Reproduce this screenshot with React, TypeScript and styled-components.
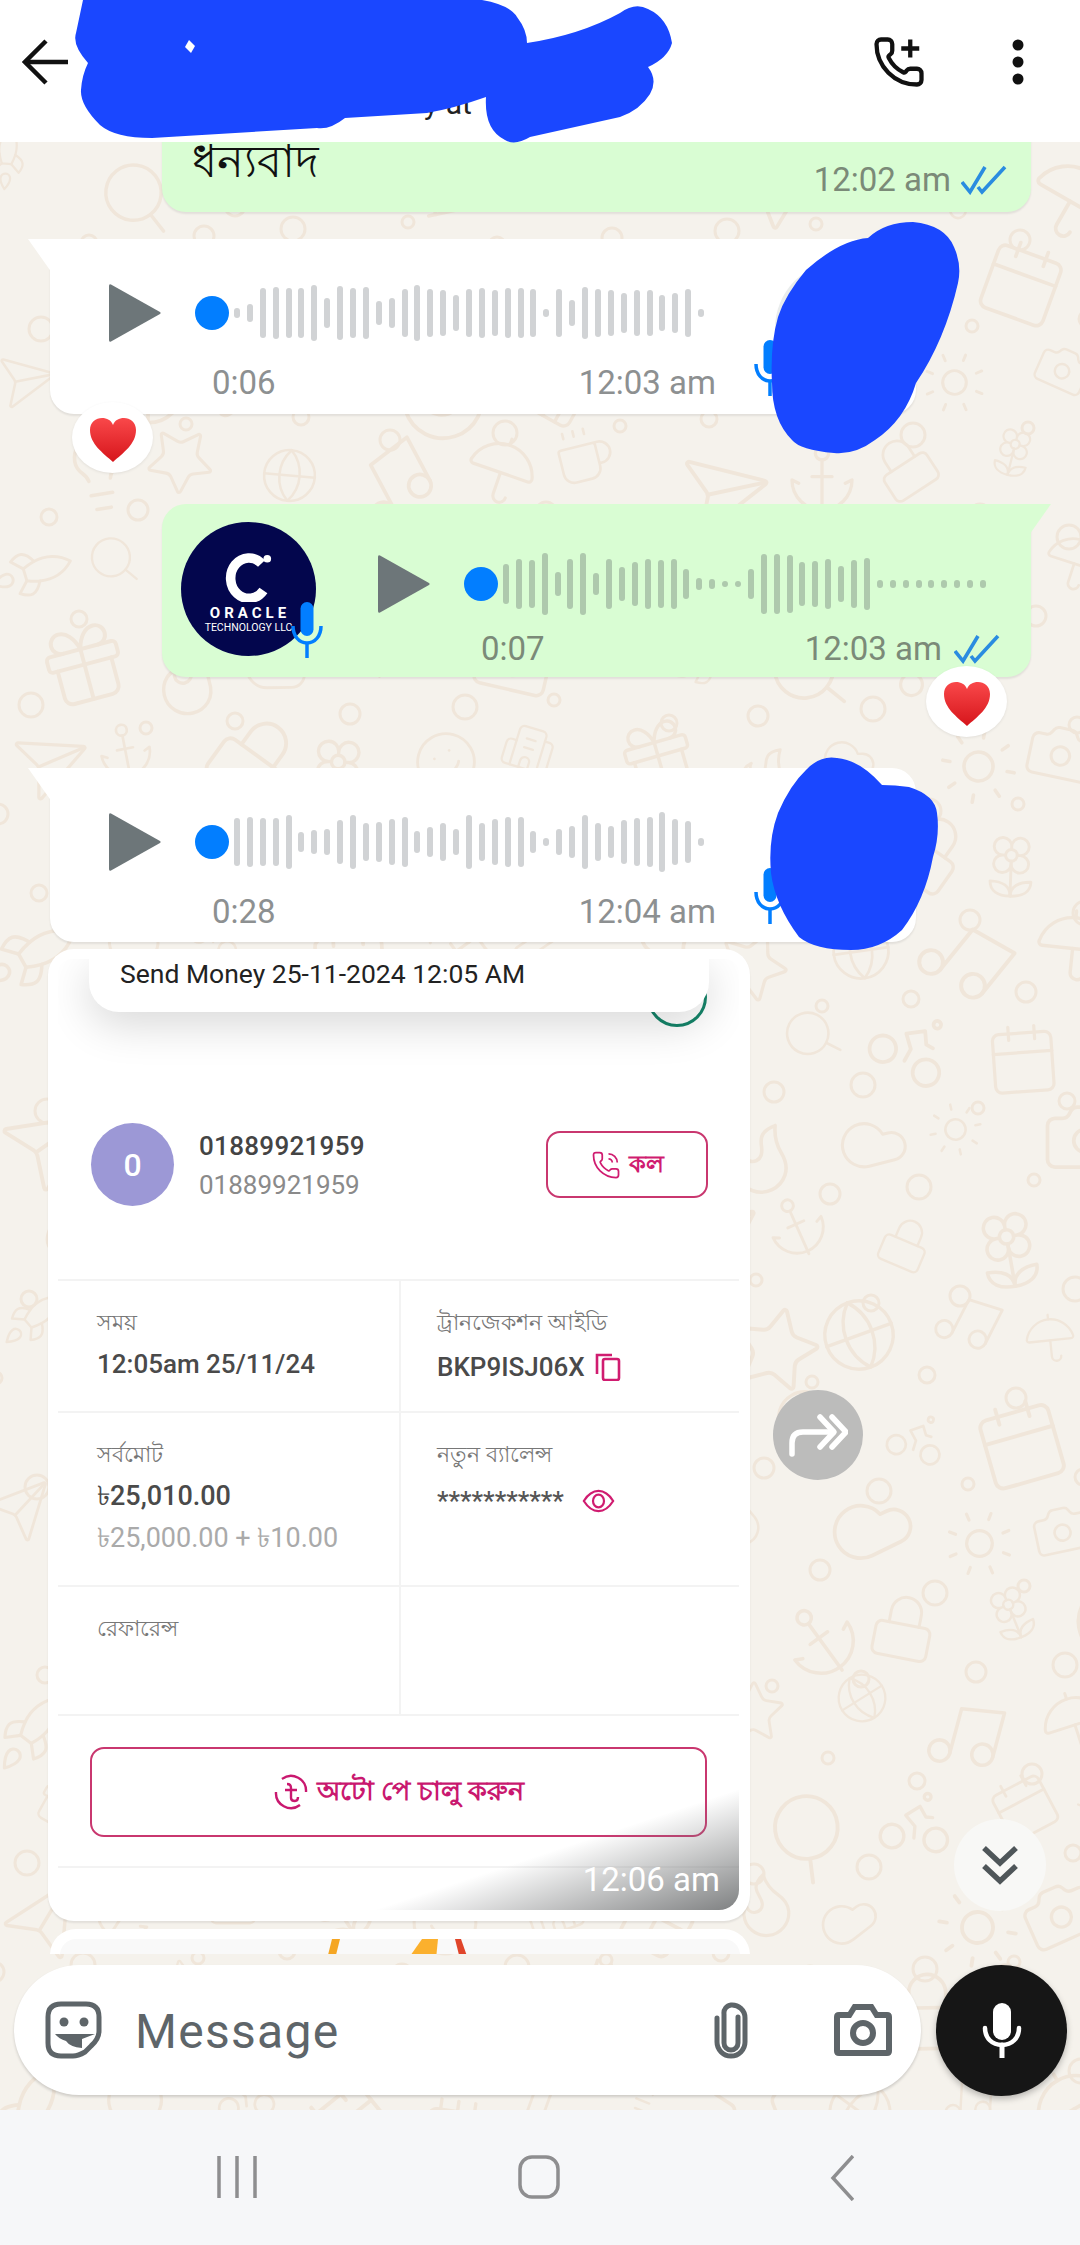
import React from "react";
import styled, { createGlobalStyle } from "styled-components";
import {
  Rocket, Coffee, Camera, Music, Cloud, Star, Gift, Pencil, Smile, Calendar, Lock, Search, Send,
  Heart, Umbrella, Sun, Globe, Flame, Lightbulb, Building2, Cake, Flower2, Bike, Anchor,
} from "lucide-react";

const Global = createGlobalStyle`
  html, body { margin: 0; padding: 0; background: #fff; }
  body { font-family: Roboto, "Noto Sans", "Noto Sans CJK SC", sans-serif; }
  * { box-sizing: border-box; }
`;

const Screen = styled.div`
  width: 1080px; height: 2245px; display: flex; flex-direction: column;
  overflow: hidden; position: relative; background: #fff;
`;
const Header = styled.header`
  height: 142px; flex: none; display: flex; align-items: center; background: #fff;
  padding: 0 55px 18px 22px; position: relative; z-index: 3;
`;
const HeaderTitle = styled.div`
  flex: 1; align-self: flex-end; padding: 0 0 0 354px; font-size: 30px; line-height: 32px; color: #222;
  margin-bottom: 4px;
`;
const HeaderIcons = styled.div`display: flex; align-items: center; gap: 85px;`;
const Chat = styled.main`
  flex: 1; position: relative; display: flex; flex-direction: column; overflow: hidden;
  background: #f5f2ec;
`;
const DoodleLayer = styled.svg`position: absolute; inset: 0; width: 100%; height: 100%;`;
const Messages = styled.div`
  height: 1812px; flex: none; position: relative; overflow: hidden; display: flex; flex-direction: column;
`;
const TextBubble = styled.div`
  margin: -32px 0 0 162px; width: 869px; height: 102px; flex: none; background: #d9fdd3;
  border-radius: 0 0 24px 24px; padding: 22px 24px 0 30px; position: relative;
  box-shadow: 0 2px 2px rgba(0,0,0,.08); display: flex; justify-content: space-between;
`;
const BanglaLarge = styled.span`font-size: 45px; line-height: 56px; color: #111; font-family: "Noto Sans", Roboto, sans-serif;`;
const MetaRow = styled.div`display: flex; align-items: center; gap: 10px; margin-top: 28px; height: 40px;`;
const Time = styled.span<{ $tone: string }>`
  font-size: 33px; line-height: 40px; color: ${(p) => p.$tone}; white-space: nowrap;
`;
const Bubble = styled.div<{ $out?: boolean; $top: number; $h: number }>`
  flex: none; position: relative; margin-top: ${(p) => p.$top}px; height: ${(p) => p.$h}px;
  background: ${(p) => (p.$out ? "#d9fdd3" : "#fff")};
  margin-left: ${(p) => (p.$out ? 162 : 50)}px; width: ${(p) => (p.$out ? 869 : 866)}px;
  border-radius: ${(p) => (p.$out ? "24px 0 24px 24px" : "0 24px 24px 24px")};
  box-shadow: 0 2px 2px rgba(0,0,0,.08);
  display: flex; align-items: flex-start; padding-left: ${(p) => (p.$out ? 19 : 59)}px;
  &::before {
    content: ""; position: absolute; top: 0; width: 24px; height: 34px;
    background: inherit;
    ${(p) => (p.$out
      ? "right: -20px; clip-path: polygon(0 0, 100% 0, 0 100%);"
      : "left: -22px; clip-path: polygon(0 0, 100% 0, 100% 100%);")}
  }
`;
const VoiceAvatar = styled.div`
  width: 135px; height: 134px; border-radius: 50%; background: #03064d; color: #fff; flex: none;
  margin-top: 18px; margin-right: 62px; position: relative; display: flex; flex-direction: column;
  align-items: center; padding-top: 30px;
`;
const LogoWord = styled.div`font-size: 15px; line-height: 17px; font-weight: 700; letter-spacing: 4px; margin-top: 3px; padding-left: 3px;`;
const LogoSub = styled.div`font-size: 10.5px; line-height: 12px; white-space: nowrap;`;
const AvatarMic = styled.div`position: absolute; right: -7px; bottom: -2px; line-height: 0;`;
const Player = styled.div<{ $w: number; $top: number }>`
  width: ${(p) => p.$w}px; margin-top: ${(p) => p.$top}px; display: flex; flex-direction: column;
`;
const Track = styled.div`display: flex; align-items: center; height: 64px;`;
const Dot = styled.div`width: 34px; height: 34px; border-radius: 50%; background: #027eff; margin-left: 33px; margin-right: 5px; flex: none;`;
const Bars = styled.div`display: flex; align-items: center; gap: 6.9px;`;
const Bar = styled.i<{ $c: string }>`display: block; width: 6px; border-radius: 3px; background: ${(p) => p.$c}; flex: none;`;
const PlayerMeta = styled.div<{ $gap: number }>`
  display: flex; justify-content: space-between; align-items: center; margin-top: ${(p) => p.$gap}px; padding-left: 103px;
`;
const MetaEnd = styled.div`display: flex; align-items: center; gap: 12px;`;
const HiddenAvatar = styled.div`position: absolute; right: 6px; top: 22px; width: 135px; height: 135px; border-radius: 50%; background: #e9ecec;`;
const SideMic = styled.div`position: absolute; left: 704px; bottom: 18px; line-height: 0;`;
const Reaction = styled.div<{ $out?: boolean }>`
  position: absolute; width: 81px; height: 71px; border-radius: 50%; background: #fff; padding-top: 5px;
  display: flex; align-items: center; justify-content: center; box-shadow: 0 1px 3px rgba(0,0,0,.08);
  ${(p) => (p.$out ? "right: 24px; bottom: -60px;" : "left: 22px; bottom: -59px;")}
`;

const Card = styled.article`
  flex: none; margin: 7px 0 0 48px; width: 702px; height: 972px; background: #fff; border-radius: 26px;
  padding: 10px 10px 11px; box-shadow: 0 2px 2px rgba(0,0,0,.08);
`;
const Shot = styled.div`
  width: 681px; height: 951px; position: relative; overflow: hidden; border-radius: 14px 14px 20px 20px;
  background: #fff; display: flex; flex-direction: column;
`;
const Ring = styled.div`
  position: absolute; left: 589px; top: 8px; width: 60px; height: 60px; border-radius: 50%; border: 3px solid #15856a;
`;
const Notice = styled.div`
  position: absolute; left: 31px; top: 0; width: 620px; height: 53px; background: #fff; border-radius: 0 0 30px 30px;
  box-shadow: 0 12px 44px rgba(0,0,0,.16); padding: 0 0 0 31px; font-size: 26.5px; line-height: 29px; color: #222;
`;
const Contact = styled.section`
  height: 322px; flex: none; padding: 164px 31px 0 33px; display: flex; align-items: flex-start;
  border-bottom: 2px solid #f3f3f3;
`;
const Initial = styled.div`
  width: 83px; height: 83px; border-radius: 50%; background: #9c98d6; color: #fff; font-size: 32px; font-weight: 500;
  display: flex; align-items: center; justify-content: center; flex: none;
`;
const ContactText = styled.div`margin-left: 25px; flex: 1; display: flex; flex-direction: column; gap: 9px; padding-top: 8px;`;
const ContactName = styled.div`font-size: 26px; line-height: 30px; font-weight: 500; color: #444; letter-spacing: .3px;`;
const ContactSub = styled.div`font-size: 26px; line-height: 30px; color: #8a8a8a;`;
const CallButton = styled.div`
  width: 162px; height: 67px; border: 2px solid #c9376f; border-radius: 14px; margin-top: 8px;
  display: flex; align-items: center; justify-content: center; gap: 8px; color: #d01c70; font-size: 24px; font-weight: 700;
`;
const Row = styled.div<{ $h: number }>`
  height: ${(p) => p.$h}px; flex: none; display: grid; grid-template-columns: 341px 340px; border-bottom: 2px solid #f3f3f3;
`;
const Cell = styled.div<{ $right?: boolean }>`
  padding: 25px 0 0 ${(p) => (p.$right ? 36 : 39)}px; ${(p) => (p.$right ? "border-left: 2px solid #f3f3f3;" : "")}
  display: flex; flex-direction: column;
`;
const Label = styled.div`font-size: 22px; line-height: 30px; color: #777; font-family: "Noto Sans", Roboto, sans-serif;`;
const Value = styled.div<{ $mt?: number; $fs?: number }>`
  font-size: ${(p) => p.$fs ?? 26}px; line-height: 30px; font-weight: 500; color: #4a4a4a;
  margin-top: ${(p) => p.$mt ?? 13}px; display: flex; align-items: center; gap: 10px;
`;
const SubValue = styled.div`font-size: 27px; line-height: 30px; color: #aaa; margin-top: 12px;`;
const Stars = styled.span`font-size: 26px; color: #555; line-height: 30px;`;
const ActionWrap = styled.div`height: 152px; flex: none; padding: 31px 32px 0; border-bottom: 2px solid #f3f3f3;`;
const ActionButton = styled.div`
  height: 90px; border: 2px solid #c9376f; border-radius: 14px; display: flex; align-items: center; justify-content: center; gap: 8px;
  color: #c9186f; font-size: 27px; font-weight: 600; font-family: "Noto Sans", Roboto, sans-serif;
`;
const Shade = styled.div`
  position: absolute; right: 0; bottom: 0; width: 365px; height: 121px;
  background: linear-gradient(to bottom right, rgba(120,122,123,0) 50%, rgba(120,122,123,.95) 100%);
`;
const ShotTime = styled.span`position: absolute; right: 19px; bottom: 10px; font-size: 33px; line-height: 40px; color: #fff;`;
const NextCard = styled.div`
  flex: none; margin: 8px 0 0 50px; width: 700px; height: 60px; background: #fff; border-radius: 26px 26px 0 0; padding: 10px 10px 0;
`;
const NextInner = styled.div`height: 50px; background: #f9f9f9; border-radius: 16px 16px 0 0; line-height: 0;`;

const RoundBtn = styled.div<{ $x: number; $y: number; $d: number; $bg: string }>`
  position: absolute; left: ${(p) => p.$x}px; top: ${(p) => p.$y}px; width: ${(p) => p.$d}px; height: ${(p) => p.$d}px;
  border-radius: 50%; background: ${(p) => p.$bg}; display: flex; align-items: center; justify-content: center; z-index: 2;
`;
const Composer = styled.div`
  height: 156px; flex: none; padding: 11px 13px 0 14px; display: flex; gap: 15px; position: relative; align-items: flex-start;
`;
const InputPill = styled.div`
  width: 907px; height: 130px; background: #fff; border-radius: 65px; display: flex; align-items: center;
  padding: 0 29px 0 31px; box-shadow: 0 2px 3px rgba(0,0,0,.16);
`;
const Placeholder = styled.div`
  flex: 1; font-size: 48px; line-height: 56px; color: #5e6569; margin-left: 33px; letter-spacing: 1.3px; padding-top: 3px;
`;
const PillIcons = styled.div`display: flex; align-items: center; gap: 86px;`;
const MicFab = styled.div`
  width: 131px; height: 131px; border-radius: 50%; background: #161616; flex: none; display: flex; align-items: center; justify-content: center;
  box-shadow: 0 3px 6px rgba(0,0,0,.25);
`;
const NavBar = styled.nav`
  height: 135px; flex: none; background: #f6f7f9; display: grid; grid-template-columns: 217px 40px 261px 42px 270px 24px;
  padding-top: 45px; align-items: start;
`;
const Scribbles = styled.svg`position: absolute; left: 0; top: 0; width: 1080px; height: 960px; z-index: 4; pointer-events: none;`;

const icons = [Rocket, Coffee, Camera, Music, Cloud, Star, Gift, Pencil, Smile, Calendar, Lock, Search, Send, Heart, Umbrella, Sun, Globe, Flame, Lightbulb, Building2, Cake, Flower2, Bike, Anchor];
const doodles: { I: typeof Rocket; x: number; y: number; s: number; r: number }[] = [];
const rings: { x: number; y: number; r: number }[] = [];
for (let row = 0, n = 0; row < 21; row++) {
  for (let col = 0; col < 11; col++, n++) {
    const x = col * 104 + (row % 2 ? 50 : 0) - 20 + ((n * 37) % 26);
    const y = row * 96 - 10 + ((n * 53) % 30);
    doodles.push({
      I: icons[(n * 11 + row * 5) % icons.length],
      x, y,
      s: 54 + ((n * 29) % 42),
      r: ((n * 47) % 80) - 40,
    });
    rings.push({ x: x - 6, y: y + 88, r: 6 + (n % 4) * 2 });
  }
}

const wave1 = [10,18,50,52,50,50,56,30,54,50,52,24,30,48,56,48,46,36,48,50,46,50,50,48,8,48,26,52,48,46,40,46,46,36,40,48,8];
const wave2 = [40,50,48,62,24,50,62,22,50,34,44,50,48,50,30,12,10,6,6,30,60,60,58,44,46,50,36,48,52,8,8,8,8,8,8,8,8,8];
const wave3 = [48,50,48,48,54,20,24,26,44,54,38,40,46,50,22,30,38,26,54,38,46,50,50,22,8,26,32,54,38,32,44,48,50,60,46,42,8];

const PlayIcon = () => (
  <svg width="53" height="60" viewBox="0 0 53 60" style={{ flex: "none" }}>
    <path d="M2 1.5 L51 29 Q52.5 30 51 31 L2 58.5 Q0 59.5 0 57 V3 Q0 .5 2 1.5 Z" fill="#6d7679" />
  </svg>
);
const Ticks = ({ w = 46 }: { w?: number }) => (
  <svg width={w} height="30" viewBox="0 0 46 30" fill="none" stroke="#2a8ce0" strokeWidth="3.6">
    <path d="M1 17 L9 27 L24 2" /><path d="M17 22 L21 27 L44 2" />
  </svg>
);
const BlueMic = ({ w = 32, h = 56 }: { w?: number; h?: number }) => (
  <svg width={w} height={h} viewBox="0 0 32 56" fill="none">
    <rect x="9.5" y="0" width="13" height="34" rx="6.5" fill="#027eff" />
    <path d="M2 24 C2 34 8 41 16 41 C24 41 30 34 30 24" stroke="#027eff" strokeWidth="3.5" />
    <path d="M16 41 V56" stroke="#027eff" strokeWidth="3.5" />
  </svg>
);
const HeartIcon = () => (
  <svg width="48" height="46" viewBox="0 0 48 46">
    <defs>
      <linearGradient id="hg" x1="0" y1="0" x2="0" y2="1">
        <stop offset="0" stopColor="#f9484a" /><stop offset="1" stopColor="#d6151b" />
      </linearGradient>
    </defs>
    <path d="M24 45 C14 36 1 27 1 13 C1 5 7 1 13 1 C18 1 22 3 24 8 C26 3 30 1 35 1 C41 1 47 5 47 13 C47 27 34 36 24 45 Z" fill="url(#hg)" />
  </svg>
);
const Wave = ({ data, color }: { data: number[]; color: string }) => (
  <Bars>{data.map((h, i) => <Bar key={i} $c={color} style={{ height: h }} />)}</Bars>
);

export default function App() {
  return (
    <>
      <Global />
      <Screen>
        <Header>
          <svg width="48" height="46" viewBox="0 0 48 46" fill="none" stroke="#111" strokeWidth="4.5" style={{ flex: "none" }}>
            <path d="M46 23 H4" /><path d="M24 2 L3 23 L24 44" />
          </svg>
          <HeaderTitle>y at</HeaderTitle>
          <HeaderIcons>
            <svg width="54" height="56" viewBox="0 0 24 24" fill="none" stroke="#111" strokeWidth="1.9">
              <path d="M13.832 16.568a1 1 0 0 0 1.213-.303l.355-.465A2 2 0 0 1 17 15h3a2 2 0 0 1 2 2v3a2 2 0 0 1-2 2A18 18 0 0 1 2 4a2 2 0 0 1 2-2h3a2 2 0 0 1 2 2v3a2 2 0 0 1-.8 1.6l-.468.351a1 1 0 0 0-.292 1.233 14 14 0 0 0 6.392 6.384" />
              <path d="M17 2v8M13 6h8" />
            </svg>
            <svg width="14" height="46" viewBox="0 0 14 46" fill="#111">
              <circle cx="7" cy="6" r="5.5" /><circle cx="7" cy="23" r="5.5" /><circle cx="7" cy="40" r="5.5" />
            </svg>
          </HeaderIcons>
        </Header>

        <Chat>
          <DoodleLayer viewBox="0 0 1080 1968">
            {doodles.map(({ I, x, y, s, r }, i) => (
              <g key={i} transform={`rotate(${r} ${x + s / 2} ${y + s / 2})`}>
                <I x={x} y={y} width={s} height={s} color="#f0e6da" strokeWidth={1} />
              </g>
            ))}
            {rings.map(({ x, y, r }, i) => (
              <circle key={i} cx={x} cy={y} r={r} fill="none" stroke="#f0e6da" strokeWidth="3" />
            ))}
          </DoodleLayer>

          <Messages>
            <TextBubble>
              <BanglaLarge>ধন্যবাদ</BanglaLarge>
              <MetaRow>
                <Time $tone="#7b8a78">12:02 am</Time>
                <Ticks />
              </MetaRow>
            </TextBubble>

            <Bubble $top={27} $h={175}>
              <Player $w={607} $top={42}>
                <Track><PlayIcon /><Dot /><Wave data={wave1} color="#d1d3d5" /></Track>
                <PlayerMeta $gap={18}><Time $tone="#8d9091">0:06</Time><Time $tone="#8d9091">12:03 am</Time></PlayerMeta>
              </Player>
              <HiddenAvatar />
              <SideMic><BlueMic /></SideMic>
              <Reaction><HeartIcon /></Reaction>
            </Bubble>

            <Bubble $out $top={90} $h={173}>
              <VoiceAvatar>
                <svg width="50" height="50" viewBox="0 0 50 52" fill="none">
                  <path d="M38 12 A19 21 0 1 0 40 40" stroke="#fff" strokeWidth="10" />
                  <circle cx="44" cy="7" r="4" fill="#fff" />
                </svg>
                <LogoWord>ORACLE</LogoWord>
                <LogoSub>TECHNOLOGY LLC</LogoSub>
                <AvatarMic><BlueMic /></AvatarMic>
              </VoiceAvatar>
              <Player $w={622} $top={48}>
                <Track><PlayIcon /><Dot /><Wave data={wave2} color="#aec9ad" /></Track>
                <PlayerMeta $gap={13}>
                  <Time $tone="#7b8a78">0:07</Time>
                  <MetaEnd><Time $tone="#7b8a78">12:03 am</Time><Ticks /></MetaEnd>
                </PlayerMeta>
              </Player>
              <Reaction $out><HeartIcon /></Reaction>
            </Bubble>

            <Bubble $top={91} $h={174}>
              <Player $w={607} $top={42}>
                <Track><PlayIcon /><Dot /><Wave data={wave3} color="#d1d3d5" /></Track>
                <PlayerMeta $gap={18}><Time $tone="#8d9091">0:28</Time><Time $tone="#8d9091">12:04 am</Time></PlayerMeta>
              </Player>
              <HiddenAvatar />
              <SideMic><BlueMic /></SideMic>
            </Bubble>

            <Card>
              <Shot>
                <Ring />
                <Notice>Send Money 25-11-2024 12:05 AM</Notice>
                <Contact>
                  <Initial>0</Initial>
                  <ContactText>
                    <ContactName>01889921959</ContactName>
                    <ContactSub>01889921959</ContactSub>
                  </ContactText>
                  <CallButton>
                    <svg width="30" height="30" viewBox="0 0 24 24" fill="none" stroke="#d01c70" strokeWidth="1.4">
                      <path d="M13.832 16.568a1 1 0 0 0 1.213-.303l.355-.465A2 2 0 0 1 17 15h3a2 2 0 0 1 2 2v3a2 2 0 0 1-2 2A18 18 0 0 1 2 4a2 2 0 0 1 2-2h3a2 2 0 0 1 2 2v3a2 2 0 0 1-.8 1.6l-.468.351a1 1 0 0 0-.292 1.233 14 14 0 0 0 6.392 6.384" />
                      <path d="M14 3a7 7 0 0 1 7 7M14 7a3 3 0 0 1 3 3" />
                    </svg>
                    কল
                  </CallButton>
                </Contact>
                <Row $h={132}>
                  <Cell>
                    <Label>সময়</Label>
                    <Value>12:05am 25/11/24</Value>
                  </Cell>
                  <Cell $right>
                    <Label>ট্রানজেকশন আইডি</Label>
                    <Value $mt={16}>
                      BKP9ISJ06X
                      <svg width="26" height="28" viewBox="0 0 26 28" fill="none" stroke="#d01c70" strokeWidth="2.6">
                        <rect x="8" y="6" width="16" height="21" rx="2" /><path d="M2 21 V2 H17" />
                      </svg>
                    </Value>
                  </Cell>
                </Row>
                <Row $h={174}>
                  <Cell>
                    <Label>সর্বমোট</Label>
                    <Value $fs={27}>৳25,010.00</Value>
                    <SubValue>৳25,000.00 + ৳10.00</SubValue>
                  </Cell>
                  <Cell $right>
                    <Label>নতুন ব্যালেন্স</Label>
                    <Value $mt={18}>
                      <Stars>***********</Stars>
                      <svg width="33" height="24" viewBox="0 0 36 26" fill="none" stroke="#d01c70" strokeWidth="2.4" style={{ marginLeft: 8 }}>
                        <path d="M2 13 C7 5 12 2 18 2 C24 2 29 5 34 13 C29 21 24 24 18 24 C12 24 7 21 2 13 Z" /><ellipse cx="18" cy="13" rx="6" ry="7" />
                      </svg>
                    </Value>
                  </Cell>
                </Row>
                <Row $h={129}>
                  <Cell><Label>রেফারেন্স</Label></Cell>
                  <Cell $right />
                </Row>
                <ActionWrap>
                  <ActionButton>
                    <svg width="36" height="36" viewBox="0 0 36 36" fill="none" stroke="#c9186f" strokeWidth="2.4">
                      <path d="M9 5 A15 15 0 0 1 33 18" /><path d="M27 31 A15 15 0 0 1 3 18" /><path d="M14 10 Q18 10 18 14 V24 Q18 27 22 27 Q25 27 25 23 M12 16 H24" />
                    </svg>
                    অটো পে চালু করুন
                  </ActionButton>
                </ActionWrap>
                <Shade />
                <ShotTime>12:06 am</ShotTime>
              </Shot>
            </Card>

            <NextCard>
              <NextInner>
                <svg width="680" height="50" viewBox="0 0 680 50">
                  <path d="M272 0 h8 l-5 20 h-8 z" fill="#f5a623" />
                  <path d="M362 0 h16 l-2 20 h-28 z" fill="#fbb02d" />
                  <path d="M395 0 h6 l7 20 h-8 z" fill="#e0452a" />
                </svg>
              </NextInner>
            </NextCard>
          </Messages>

          <RoundBtn $x={773} $y={1248} $d={90} $bg="#bcbcbb">
            <svg width="60" height="46" viewBox="0 0 60 46" fill="none" stroke="#fff" strokeWidth="5.5" strokeLinecap="round" strokeLinejoin="round">
              <path d="M4 42 V31 Q4 20 15 20 H42" /><path d="M32 5 L46 20 L32 35" /><path d="M44 5 L58 20 L44 35" />
            </svg>
          </RoundBtn>
          <RoundBtn $x={954} $y={1677} $d={92} $bg="#f8f8f6">
            <svg width="38" height="40" viewBox="0 0 38 40" fill="none" stroke="#4f5659" strokeWidth="5.5">
              <path d="M3 3 L19 18 L35 3" /><path d="M3 21 L19 36 L35 21" />
            </svg>
          </RoundBtn>

          <Composer>
            <InputPill>
              <svg width="57" height="58" viewBox="0 0 57 58" fill="none" style={{ flex: "none" }}>
                <path d="M16 3 H41 Q54 3 54 16 V30 Q54 38 46 45 L40 51 Q33 55 28 55 H16 Q3 55 3 42 V16 Q3 3 16 3 Z" stroke="#5e6569" strokeWidth="5" />
                <circle cx="19" cy="21" r="4.5" fill="#5e6569" /><circle cx="39" cy="21" r="4.5" fill="#5e6569" />
                <path d="M10 33 H50 L37 38 V47 Q25 46 21 40 Q14 38 10 33 Z" fill="#5e6569" />
              </svg>
              <Placeholder>Message</Placeholder>
              <PillIcons>
                <svg width="34" height="57" viewBox="0 0 34 57" fill="none" stroke="#5e6569" strokeWidth="5" strokeLinecap="round">
                  <path d="M24 15 V41 A7 7 0 0 1 10 41 V12 A8 8 0 0 1 17 3 A13 13 0 0 1 31 16 V40 A14 14 0 0 1 3 40 V16" />
                </svg>
                <svg width="58" height="52" viewBox="0 0 58 52">
                  <path fillRule="evenodd" fill="#5e6569" d="M19 0 H39 L44 8 H53 Q58 8 58 13 V47 Q58 52 53 52 H5 Q0 52 0 47 V13 Q0 8 5 8 H14 Z M6 14 V46 H52 V14 H41 L36 6 H22 L17 14 Z" />
                  <circle cx="29" cy="29" r="10" fill="none" stroke="#5e6569" strokeWidth="6" />
                </svg>
              </PillIcons>
            </InputPill>
            <MicFab>
              <svg width="40" height="55" viewBox="0 0 40 55" fill="none">
                <rect x="11" y="0" width="18" height="37" rx="9" fill="#fff" />
                <path d="M3 25 C3 35 10 42 20 42 C30 42 37 35 37 25" stroke="#fff" strokeWidth="4.5" strokeLinecap="round" />
                <path d="M20 42 V55" stroke="#fff" strokeWidth="5" strokeLinecap="round" />
              </svg>
            </MicFab>
          </Composer>
        </Chat>

        <NavBar>
          <span />
          <svg width="40" height="44" viewBox="0 0 40 44" fill="none" stroke="#8e8e90" strokeWidth="3.5">
            <path d="M2 1 V43 M20 1 V43 M38 1 V43" />
          </svg>
          <span />
          <svg width="42" height="44" viewBox="0 0 42 44" fill="none" stroke="#8e8e90" strokeWidth="3.5">
            <rect x="2" y="2" width="38" height="40" rx="12" />
          </svg>
          <span />
          <svg width="24" height="46" viewBox="0 0 24 46" fill="none" stroke="#8e8e90" strokeWidth="3.5">
            <path d="M23 1 L3 23 L23 45" />
          </svg>
        </NavBar>

        <Scribbles viewBox="0 0 1080 960">
          <g fill="#1a47ff">
            <path d="M83 0 L482 0 Q510 5 517 17 Q527 30 527 43 Q580 35 620 13 Q635 2 648 9 Q668 18 672 43 Q668 58 648 67 Q658 80 650 94 Q640 110 620 117 L530 137 Q515 146 505 140 Q484 130 486 97 Q455 108 427 113 L345 118 Q330 130 317 128 L152 138 Q115 138 100 125 Q80 105 81 90 Q82 75 88 63 Q72 45 76 33 Z" />
            <path d="M913 222 Q945 225 954 247 Q962 265 958 283 Q945 340 916 383 Q905 420 875 440 Q855 455 834 453 Q800 450 792 440 Q772 420 772 383 Q770 345 778 317 Q785 295 806 270 Q840 240 868 238 Q885 222 913 222 Z" />
            <path d="M837 758 Q860 760 882 785 Q895 785 909 787 Q935 795 937 813 Q940 835 933 857 Q925 900 902 930 Q880 950 851 950 Q815 950 799 937 Q775 905 771 873 Q768 840 778 813 Q790 785 806 770 Q820 755 837 758 Z" />
          </g>
          <path d="M189 40 L195 46 L191 53 L185 47 Z" fill="#fff" />
        </Scribbles>
      </Screen>
    </>
  );
}
